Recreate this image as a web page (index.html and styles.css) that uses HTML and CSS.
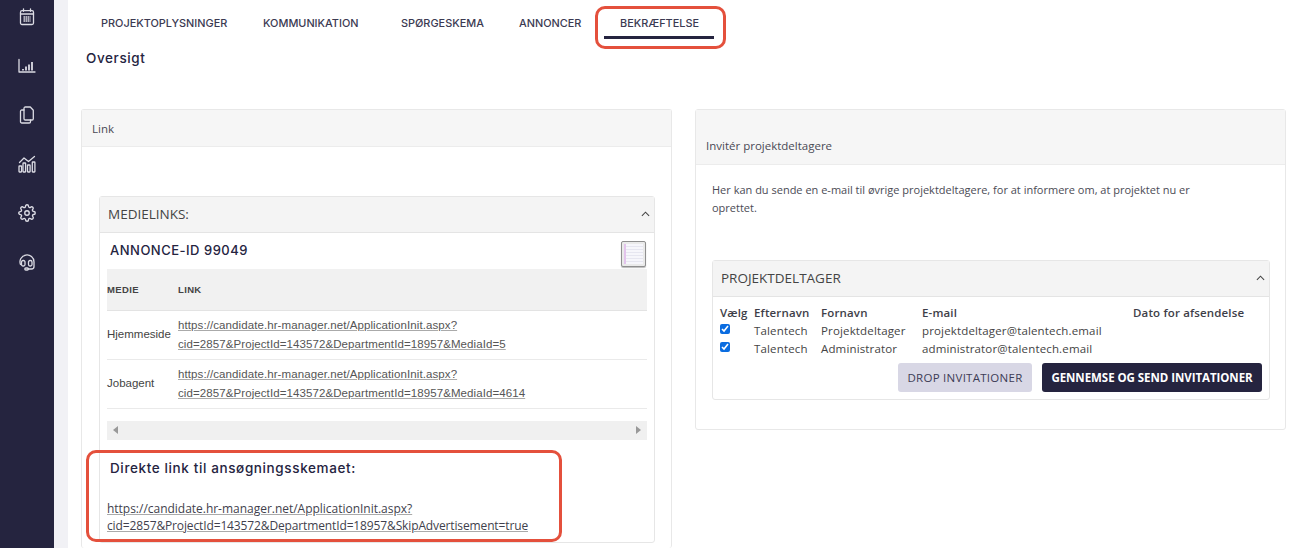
FILE: index.html
```html
<!DOCTYPE html>
<html lang="da">
<head>
<meta charset="utf-8">
<title>Bekræftelse</title>
<link rel="stylesheet" href="styles.css">
</head>
<body>
<div class="app">
  <nav class="sidebar">
    <svg class="nav-icon" viewBox="0 0 18 18"><rect x="2.500" y="2.700" width="13" height="13.800" rx="1.500"/><path d="M2.500 6h13M5.500 .8v2.500M12.500 .8v2.500"/><path class="grid" d="M5.500 9h7M5.500 11h7M5.500 13h7"/></svg>
    <svg class="nav-icon" viewBox="0 0 18 18"><path d="M1 2.500V15h16"/><path class="bars" d="M5 13.500V12M8 13.500V9.500M11 13.500V7.500M14 13.500V5"/></svg>
    <svg class="nav-icon" viewBox="0 0 18 18"><path d="M6 4H3.800a1.300 1.300 0 0 0-1.300 1.300v10.400A1.300 1.300 0 0 0 3.800 17h7.400a1.300 1.300 0 0 0 1.300-1.300V14"/><path d="M7.300 1h5l3 3.200v8.500a1.300 1.300 0 0 1-1.300 1.300H7.300A1.300 1.300 0 0 1 6 12.700V2.300A1.300 1.300 0 0 1 7.300 1z"/></svg>
    <svg class="nav-icon" viewBox="0 0 18 18"><path d="M1.500 7.500 6 3l4.500 3.500L16.500 1.500"/><rect x="1" y="11" width="2.600" height="6" rx=".5"/><rect x="5" y="8" width="2.600" height="9" rx=".5"/><rect x="9.500" y="10" width="2.600" height="7" rx=".5"/><rect x="14.300" y="7" width="2.600" height="10" rx=".5"/></svg>
    <svg class="nav-icon gear" viewBox="0 0 24 24"><circle cx="12" cy="12" r="3"/><path d="M19.400 15a1.650 1.650 0 0 0 .33 1.820l.06.06a2 2 0 0 1 0 2.830 2 2 0 0 1-2.830 0l-.06-.06a1.650 1.650 0 0 0-1.820-.33 1.650 1.650 0 0 0-1 1.510V21a2 2 0 0 1-2 2 2 2 0 0 1-2-2v-.09A1.650 1.650 0 0 0 9 19.400a1.650 1.650 0 0 0-1.820.33l-.06.06a2 2 0 0 1-2.830 0 2 2 0 0 1 0-2.830l.06-.06a1.650 1.650 0 0 0 .33-1.820 1.650 1.650 0 0 0-1.510-1H3a2 2 0 0 1-2-2 2 2 0 0 1 2-2h.09A1.650 1.650 0 0 0 4.600 9a1.650 1.650 0 0 0-.33-1.820l-.06-.06a2 2 0 0 1 0-2.830 2 2 0 0 1 2.830 0l.06.06a1.650 1.650 0 0 0 1.820.33H9a1.650 1.650 0 0 0 1-1.510V3a2 2 0 0 1 2-2 2 2 0 0 1 2 2v.09a1.650 1.650 0 0 0 1 1.510 1.650 1.650 0 0 0 1.820-.33l.06-.06a2 2 0 0 1 2.830 0 2 2 0 0 1 0 2.830l-.06.06a1.650 1.650 0 0 0-.33 1.820V9a1.650 1.650 0 0 0 1.510 1H21a2 2 0 0 1 2 2 2 2 0 0 1-2 2h-.09a1.650 1.650 0 0 0-1.510 1z"/></svg>
    <svg class="nav-icon" viewBox="0 0 18 18"><path d="M2.500 11.500A7 7 0 1 1 16 9v4.500a2.500 2.500 0 0 1-2.500 2.500H10"/><rect x="3.500" y="7.500" width="3.500" height="5.500" rx="1.500"/><rect x="10.500" y="7.500" width="3.500" height="5.500" rx="1.500"/><rect x="6.800" y="15" width="3.600" height="2" rx="1"/></svg>
  </nav>
  <div class="gutter"></div>
  <main class="main">
    <ul class="tabs">
      <li class="tab">PROJEKTOPLYSNINGER</li>
      <li class="tab">KOMMUNIKATION</li>
      <li class="tab">SPØRGESKEMA</li>
      <li class="tab">ANNONCER</li>
      <li class="tab active">BEKRÆFTELSE</li>
    </ul>
    <h1 class="page-title">Oversigt</h1>
    <div class="columns">
      <section class="panel panel-left">
        <header class="panel-head">Link</header>
        <div class="panel-body-left">
          <div class="box media-box">
            <header class="box-head"><span>MEDIELINKS:</span>
              <svg class="chevron" viewBox="0 0 10 6"><path d="M1 5l4-4 4 4"/></svg>
            </header>
            <div class="media-content">
              <div class="ad-row">
                <h2 class="ad-title">ANNONCE-ID 99049</h2>
                <span class="copy-btn"><span class="copy-page"></span></span>
              </div>
              <table class="media-table">
                <thead><tr><th class="col-media">MEDIE</th><th>LINK</th></tr></thead>
                <tbody>
                  <tr><td>Hjemmeside</td><td><a class="media-link">https://candidate.hr-manager.net/ApplicationInit.aspx?<br>cid=2857&amp;ProjectId=143572&amp;DepartmentId=18957&amp;MediaId=5</a></td></tr>
                  <tr><td>Jobagent</td><td><a class="media-link">https://candidate.hr-manager.net/ApplicationInit.aspx?<br>cid=2857&amp;ProjectId=143572&amp;DepartmentId=18957&amp;MediaId=4614</a></td></tr>
                </tbody>
              </table>
              <div class="scrollbar"><span class="arrow-left"></span><span class="arrow-right"></span></div>
              <h2 class="direct-title">Direkte link til ansøgningsskemaet:</h2>
              <a class="direct-link"><span class="direct-first">https://candidate.hr-manager.net/ApplicationInit.aspx?</span><br>cid=2857&amp;ProjectId=143572&amp;DepartmentId=18957&amp;SkipAdvertisement=true</a>
            </div>
          </div>
        </div>
      </section>
      <section class="panel panel-right">
        <header class="panel-head panel-head-tall">Invitér projektdeltagere</header>
        <div class="panel-body-right">
          <p class="intro">Her kan du sende en e-mail til øvrige projektdeltagere, for at informere om, at projektet nu er oprettet.</p>
          <div class="box">
            <header class="box-head"><span>PROJEKTDELTAGER</span>
              <svg class="chevron" viewBox="0 0 10 6"><path d="M1 5l4-4 4 4"/></svg>
            </header>
            <div class="part-content">
              <table class="part-table">
                <thead><tr><th class="c1">Vælg</th><th class="c2">Efternavn</th><th class="c3">Fornavn</th><th class="c4">E-mail</th><th>Dato for afsendelse</th></tr></thead>
                <tbody>
                  <tr><td><input class="check" type="checkbox" checked></td><td>Talentech</td><td>Projektdeltager</td><td>projektdeltager@talentech.email</td><td></td></tr>
                  <tr><td><input class="check" type="checkbox" checked></td><td>Talentech</td><td>Administrator</td><td>administrator@talentech.email</td><td></td></tr>
                </tbody>
              </table>
              <div class="actions">
                <button class="btn btn-light">DROP INVITATIONER</button>
                <button class="btn btn-dark">GENNEMSE OG SEND INVITATIONER</button>
              </div>
            </div>
          </div>
        </div>
      </section>
    </div>
    <div class="mark mark-tab"></div>
    <div class="mark mark-link"></div>
  </main>
</div>
</body>
</html>
```
FILE: styles.css
```css
* { box-sizing: border-box; }
html, body { margin: 0; height: 548px; overflow: hidden; background: #fff; }
body { font-family: "Open Sans", sans-serif; color: #333; }
.app { display: flex; height: 548px; }
.sidebar {
  width: 54px; flex: none; background: #25243f;
  display: flex; flex-direction: column; align-items: center;
  padding-top: 8px; gap: 31px;
}
.nav-icon { width: 18px; height: 18px; flex: none; fill: none; stroke: #dcdce4; stroke-width: 1.300; stroke-linejoin: round; stroke-linecap: round; }
.nav-icon.gear { stroke-width: 1.800; }
.nav-icon .bars { stroke-width: 1.800; stroke-linecap: butt; }
.nav-icon .grid { stroke-width: 1.400; stroke-dasharray: 1.500 .5; stroke-linecap: butt; }
.gutter { width: 14px; flex: none; background: #f1f1f5; }
.main { position: relative; flex: 1; min-width: 0; height: 548px; overflow: hidden; }

.tabs { display: grid; grid-template-columns: 162px 138px 118px 85px 110px; justify-content: start; list-style: none; margin: 0; padding: 0 0 0 33px; height: 39px; }
.tab {
  font: 500 10.900px/1 Inter, sans-serif; letter-spacing: 0; color: #3b3a52;
  padding-top: 18px;
  white-space: nowrap;
}
.tab.active { border-bottom: 3px solid #25243f; padding-left: 16px; }
.page-title { font: 500 13.500px/18px Inter, sans-serif; letter-spacing: .6px; color: #25243f; margin: 10px 0 0 18px; }

.columns { display: flex; gap: 23px; align-items: flex-start; margin: 42px 0 0 13px; }
.panel { width: 591px; flex: none; border: 1px solid #e8e8e8; border-radius: 3px; }
.panel-left { height: 439px; border-bottom: 0; }
.panel-head { background: #f6f6f6; border-bottom: 1px solid #ececec; height: 37px; padding: 0 10px; font-size: 11.500px; line-height: 37px; color: #4a4a55; }
.panel-head-tall { height: 55px; padding-top: 17px; }
.panel-body-left { padding: 49px 16px 0 17px; }
.box { border: 1px solid #e6e6e6; border-radius: 3px; background: #fff; }
.box-head { display: flex; align-items: center; justify-content: space-between; background: #f4f4f4; border-bottom: 1px solid #e4e4e4; height: 36px; padding: 0 4px 2px 8px; font-size: 13.500px; color: #444; }
.chevron { width: 9px; height: 6px; fill: none; stroke: #444; stroke-width: 1.200; }
.media-content { padding: 0 7px; height: 309px; }
.ad-row { display: flex; justify-content: space-between; height: 36px; padding: 8px 1px 0 3px; }
.ad-title { margin: 0; font: 500 13px/18px Inter, sans-serif; letter-spacing: .5px; color: #25243f; }
.copy-btn { width: 25px; height: 26px; border: 1px solid #8f8f8f; border-radius: 2px; background: #eaeaea; padding: 2px; box-shadow: 0 1px 1px #bbb; }
.copy-page { display: block; height: 100%; background: repeating-linear-gradient(#f6f6fb 0 2px, #e6e6f0 2px 3px); border-left: 2px solid #e3c4ec; }
.media-table { width: 540px; border-collapse: collapse; font: 11.500px/19px "Liberation Sans", sans-serif; color: #444; }
.media-table th { background: #f1f1f1; height: 41px; text-align: left; padding: 0; font-size: 9.500px; letter-spacing: .35px; font-weight: 700; color: #444; border-bottom: 1px solid #e3e3e3; }
.media-table td { height: 49px; padding: 0; border-bottom: 1px solid #eaeaea; }
.col-media { width: 71px; }
.media-link { color: #555; text-decoration: underline; text-decoration-color: #aaa; letter-spacing: .09px; }
.scrollbar { display: flex; align-items: center; justify-content: space-between; width: 540px; height: 19px; margin-top: 12px; padding: 0 6px; background: #f0f0f0; }
.arrow-left { border: 4px solid transparent; border-left: 0; border-right: 5px solid #999; }
.arrow-right { border: 4px solid transparent; border-right: 0; border-left: 5px solid #999; }
.direct-title { margin: 20px 0 0 3px; font: 500 13.500px/16px Inter, sans-serif; letter-spacing: .62px; color: #25243f; }
.direct-link { display: block; margin-top: 24px; font: 12px/17px "Open Sans", sans-serif; letter-spacing: -.13px; color: #3f3f4d; text-decoration: underline; text-decoration-color: #aaa; }
.direct-first { letter-spacing: -.02px; }

.panel-right { height: 321px; }
.panel-body-right { padding: 16px 15px 0 16px; }
.intro { margin: 0 0 43px; font-size: 11px; line-height: 18px; color: #4b4b55; width: 505px; }
.part-content { padding: 7px 7px 7px 7px; }
.part-table { width: 100%; border-collapse: collapse; font-size: 11.500px; line-height: 18px; color: #444; letter-spacing: .15px; }
.part-table th { padding: 0; text-align: left; font-weight: 600; color: #3e3e48; }
.part-table td { padding: 0; vertical-align: top; }
.c1 { width: 34px; }
.c2 { width: 67px; }
.c3 { width: 101px; }
.c4 { width: 211px; }
.check { display: block; width: 10px; height: 10px; margin: 2px 0 0 0; accent-color: #0a6ce0; }
.actions { display: flex; justify-content: flex-end; gap: 10px; margin-top: 5px; }
.btn { height: 29px; border: 0; border-radius: 3px; font: 500 11.500px/29px "Open Sans", sans-serif; letter-spacing: .27px; padding: 0; }
.btn-light { width: 134px; background: #d8d7e5; color: #3d3c55; }
.btn-dark { width: 220px; background: #25243f; color: #fff; font-weight: 700; letter-spacing: -.05px; }

.mark { position: absolute; border: 3px solid #e4503c; border-radius: 10px; pointer-events: none; }
.mark-tab { left: 527px; top: 6px; width: 131px; height: 43px; }
.mark-link { left: 18px; top: 450px; width: 476px; height: 92px; }
```
